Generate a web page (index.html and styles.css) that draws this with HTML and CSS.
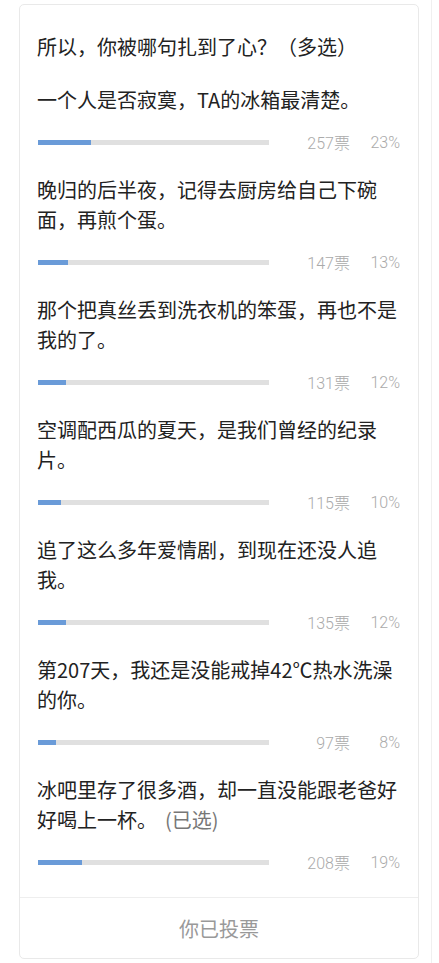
FILE: index.html
```html
<!DOCTYPE html>
<html lang="zh-CN">
<head>
<meta charset="utf-8">
<title>投票</title>
<link rel="stylesheet" href="styles.css">
</head>
<body>
<div class="page">
  <div class="card">
    <div class="card-body">
      <div class="title">所以，你被哪句扎到了心？（多选）</div>

      <div class="option">
        <div class="opt-text">一个人是否寂寞，TA的冰箱最清楚。</div>
        <div class="bar-row">
          <div class="bar"><div class="fill" style="width:23%"></div></div>
          <span class="votes">257票</span>
          <span class="pct">23%</span>
        </div>
      </div>

      <div class="option">
        <div class="opt-text">晚归的后半夜，记得去厨房给自己下碗面，再煎个蛋。</div>
        <div class="bar-row">
          <div class="bar"><div class="fill" style="width:13%"></div></div>
          <span class="votes">147票</span>
          <span class="pct">13%</span>
        </div>
      </div>

      <div class="option">
        <div class="opt-text">那个把真丝丢到洗衣机的笨蛋，再也不是我的了。</div>
        <div class="bar-row">
          <div class="bar"><div class="fill" style="width:12%"></div></div>
          <span class="votes">131票</span>
          <span class="pct">12%</span>
        </div>
      </div>

      <div class="option">
        <div class="opt-text">空调配西瓜的夏天，是我们曾经的纪录片。</div>
        <div class="bar-row">
          <div class="bar"><div class="fill" style="width:10%"></div></div>
          <span class="votes">115票</span>
          <span class="pct">10%</span>
        </div>
      </div>

      <div class="option">
        <div class="opt-text">追了这么多年爱情剧，到现在还没人追我。</div>
        <div class="bar-row">
          <div class="bar"><div class="fill" style="width:12%"></div></div>
          <span class="votes">135票</span>
          <span class="pct">12%</span>
        </div>
      </div>

      <div class="option">
        <div class="opt-text">第207天，我还是没能戒掉42℃热水洗澡的你。</div>
        <div class="bar-row">
          <div class="bar"><div class="fill" style="width:8%"></div></div>
          <span class="votes">97票</span>
          <span class="pct">8%</span>
        </div>
      </div>

      <div class="option">
        <div class="opt-text">冰吧里存了很多酒，却一直没能跟老爸好好喝上一杯。<span class="chosen">(已选)</span></div>
        <div class="bar-row">
          <div class="bar"><div class="fill" style="width:19%"></div></div>
          <span class="votes">208票</span>
          <span class="pct">19%</span>
        </div>
      </div>
    </div>
    <div class="card-foot">你已投票</div>
  </div>
</div>
</body>
</html>
```

FILE: styles.css
```css
html, body {
  margin: 0;
  padding: 0;
  background: #ffffff;
}

body {
  font-family: "Noto Sans CJK SC", "Noto Sans", sans-serif;
  color: #222;
}

.page {
  width: 432px;
  height: 963px;
  border-right: 1px solid #f0f0f0;
  box-sizing: border-box;
  padding: 4px 0 0 19px;
}

.card {
  width: 400px;
  box-sizing: border-box;
  border: 1px solid #e9e9e9;
  border-radius: 5px;
  background: #fff;
}

.card-body {
  padding: 27px 17px 25px 17px;
}

.title,
.opt-text {
  font-size: 20px;
  line-height: 30px;
  color: #222;
  width: 364px;
}

.option {
  margin-top: 23px;
}

.chosen {
  display: inline-block;
  line-height: 30px;
  height: 30px;
  vertical-align: top;
  color: #777;
  margin-left: 8px;
}

.bar-row {
  margin-top: 17px;
  height: 20px;
  display: flex;
  align-items: center;
}

.bar {
  width: 231px;
  height: 5px;
  background: #e0e0e0;
  margin-left: 1px;
  flex: none;
}

.fill {
  height: 100%;
  background: #6a9bd8;
}

.votes,
.pct {
  font-family: Roboto, "Noto Sans CJK SC", sans-serif;
  font-weight: 300;
  font-size: 16px;
  color: #aaaaaa;
  text-align: right;
  flex: none;
}

.votes {
  width: 81px;
}

.pct {
  width: 50px;
}

.card-foot {
  border-top: 1px solid #eeeeee;
  height: 60px;
  display: flex;
  align-items: center;
  justify-content: center;
  font-size: 20px;
  color: #999;
}
```
